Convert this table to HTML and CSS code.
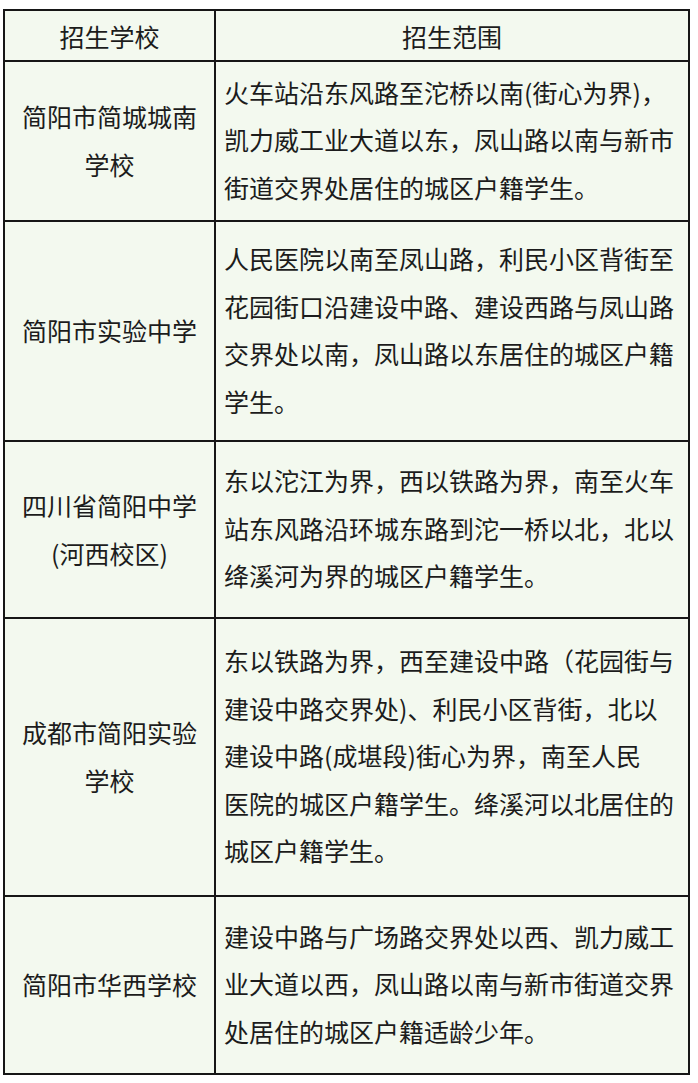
FILE: index.html
```html
<!DOCTYPE html>
<html lang="zh-CN">
<head>
<meta charset="utf-8">
<title>招生范围</title>
<link rel="stylesheet" href="styles.css">
</head>
<body>
<div class="table">
  <div class="cell head">招生学校</div>
  <div class="cell head">招生范围</div>

  <div class="cell school">简阳市简城城南<br>学校</div>
  <div class="cell scope">火车站沿东风路至沱桥以南(街心为界)，<br>凯力威工业大道以东，凤山路以南与新市<br>街道交界处居住的城区户籍学生。</div>

  <div class="cell school">简阳市实验中学</div>
  <div class="cell scope">人民医院以南至凤山路，利民小区背街至<br>花园街口沿建设中路、建设西路与凤山路<br>交界处以南，凤山路以东居住的城区户籍<br>学生。</div>

  <div class="cell school">四川省简阳中学<br>(河西校区)</div>
  <div class="cell scope">东以沱江为界，西以铁路为界，南至火车<br>站东风路沿环城东路到沱一桥以北，北以<br>绛溪河为界的城区户籍学生。</div>

  <div class="cell school">成都市简阳实验<br>学校</div>
  <div class="cell scope">东以铁路为界，西至建设中路（花园街与<br>建设中路交界处)、利民小区背街，北以<br>建设中路(成堪段)街心为界，南至人民<br>医院的城区户籍学生。绛溪河以北居住的<br>城区户籍学生。</div>

  <div class="cell school">简阳市华西学校</div>
  <div class="cell scope">建设中路与广场路交界处以西、凯力威工<br>业大道以西，凤山路以南与新市街道交界<br>处居住的城区户籍适龄少年。</div>
</div>
</body>
</html>
```

FILE: styles.css
```css
html, body {
  margin: 0;
  padding: 0;
  background: #ffffff;
}

body {
  font-family: "Noto Sans CJK SC", "Noto Sans", sans-serif;
  color: #1c1c1c;
  font-size: 25px;
}

.table {
  display: grid;
  grid-template-columns: 211px 474px;
  grid-template-rows: 51px 160px 220px 177px 278px 178px;
  width: 687px;
  margin: 9px 0 0 3px;
  border-left: 2px solid #161616;
  border-top: 2px solid #161616;
  box-sizing: border-box;
}

.cell {
  box-sizing: border-box;
  border-right: 2px solid #161616;
  border-bottom: 2px solid #161616;
  background: #f3f9ef;
  display: flex;
  align-items: center;
  line-height: 47.5px;
  white-space: nowrap;
}

.head {
  justify-content: center;
  text-align: center;
  line-height: 1.2;
}

.school {
  justify-content: center;
  text-align: center;
  line-height: 48px;
  padding-bottom: 2px;
}

.scope {
  padding: 0 12px 2px 8px;
}
```
